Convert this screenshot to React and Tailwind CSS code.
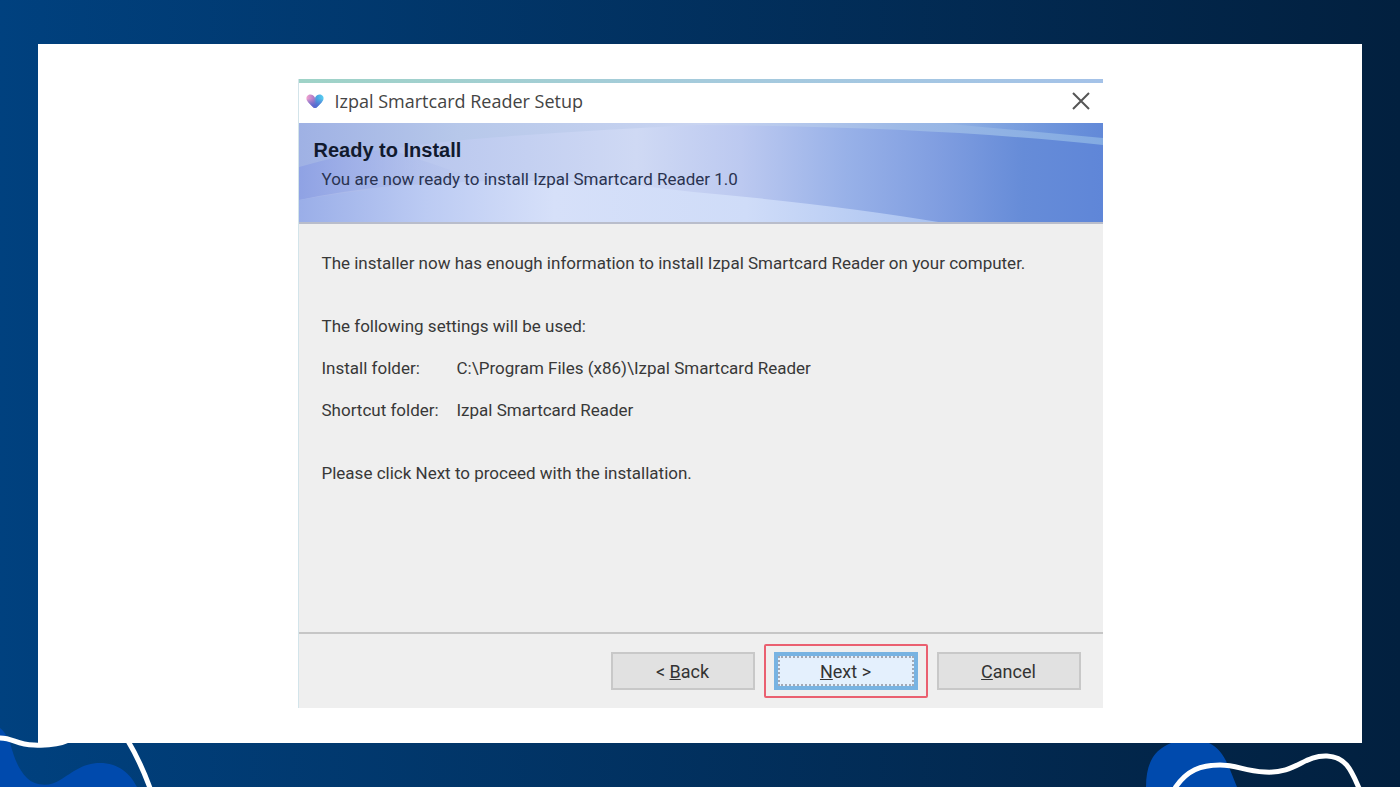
const settings = [
  { label: "Install folder:", value: "C:\\Program Files (x86)\\Izpal Smartcard Reader" },
  { label: "Shortcut folder:", value: "Izpal Smartcard Reader" },
];

const HeartLogo = () => (
  <svg viewBox="0 0 20 18" className="h-[17px] w-5" aria-hidden="true">
    <defs>
      <linearGradient id="heart" x1="0" y1="0" x2="1" y2="0">
        <stop offset="0" stopColor="#f3a3cf" />
        <stop offset="0.42" stopColor="#b07bc8" />
        <stop offset="0.6" stopColor="#45a5e0" />
        <stop offset="1" stopColor="#5cd0f2" />
      </linearGradient>
      <linearGradient id="heartShade" x1="0" y1="0" x2="0" y2="1">
        <stop offset="0.3" stopColor="#5568cf" stopOpacity="0" />
        <stop offset="0.8" stopColor="#5568cf" stopOpacity="0.9" />
      </linearGradient>
    </defs>
    {["url(#heart)", "url(#heartShade)"].map((fill) => (
      <path
        key={fill}
        fill={fill}
        d="M10 5C8 1 4 1 2 3C0 5 1 8 3 10L8 15Q10 17 12 15L17 10C19 8 20 5 18 3C16 1 12 1 10 5Z"
      />
    ))}
  </svg>
);

const BannerArt = () => (
  <svg
    viewBox="0 0 805 99"
    preserveAspectRatio="none"
    className="absolute inset-0 h-full w-full"
    aria-hidden="true"
  >
    <defs>
      <linearGradient id="band" x1="0" y1="0" x2="1" y2="0">
        <stop offset="0" stopColor="#a3b2e8" />
        <stop offset="0.15" stopColor="#b9c7ee" />
        <stop offset="0.42" stopColor="#cfd9f4" />
        <stop offset="0.55" stopColor="#bcc9f0" />
        <stop offset="0.68" stopColor="#98b1e8" />
        <stop offset="0.8" stopColor="#7f9de0" />
        <stop offset="0.9" stopColor="#668cd8" />
        <stop offset="1" stopColor="#5f86d8" />
      </linearGradient>
      <linearGradient id="topBand" gradientUnits="userSpaceOnUse" x1="0" y1="0" x2="805" y2="0">
        <stop offset="0" stopColor="#9fb1e4" />
        <stop offset="0.2" stopColor="#b7c8ea" />
        <stop offset="0.5" stopColor="#c9d4f1" />
        <stop offset="0.75" stopColor="#9db9e6" />
        <stop offset="1" stopColor="#83abe2" />
      </linearGradient>
      <linearGradient id="lowBand" gradientUnits="userSpaceOnUse" x1="0" y1="0" x2="640" y2="0">
        <stop offset="0" stopColor="#9aaee8" />
        <stop offset="0.2" stopColor="#bccbf3" />
        <stop offset="0.4" stopColor="#d6e0f9" />
        <stop offset="0.7" stopColor="#cfdcf8" />
        <stop offset="1" stopColor="#a9c2f0" />
      </linearGradient>
      <linearGradient id="leftBand" x1="0" y1="0" x2="1" y2="0">
        <stop offset="0" stopColor="#8fa2e4" />
        <stop offset="1" stopColor="#b7c5ee" stopOpacity="0" />
      </linearGradient>
      <linearGradient id="corner" x1="0" y1="0" x2="1" y2="0">
        <stop offset="0" stopColor="#6289d8" stopOpacity="0" />
        <stop offset="1" stopColor="#6289d8" />
      </linearGradient>
    </defs>
    <rect width="805" height="99" fill="url(#band)" />
    <path d="M0 44Q90 22 200 14T400 2Q640 4 805 22V0H0Z" fill="url(#topBand)" />
    <path d="M0 44Q40 32 90 26L190 60Q90 58 0 77Z" fill="url(#leftBand)" />
    <path d="M640 0L805 15V0Z" fill="url(#corner)" />
    <path d="M0 77Q200 43 395 69Q540 82 640 99H0Z" fill="url(#lowBand)" />
  </svg>
);

const LeftWave = () => (
  <svg
    viewBox="0 0 160 60"
    className="pointer-events-none absolute bottom-0 left-0 h-[60px] w-40"
    aria-hidden="true"
  >
    <path
      d="M0 1C4 4 8 10 10 16C14 30 18 42 27 51C35 59 50 60 60 53C72 46 82 36 100 36C118 36 130 46 137 60H0Z"
      fill="#004aad"
    />
    <path d="M0 11C14 11 16 18 34 18C50 19 60 17 69 13" fill="none" stroke="#fff" strokeWidth="5" />
    <path d="M128 14Q140 34 150 61" fill="none" stroke="#fff" strokeWidth="5" />
  </svg>
);

const RightWave = () => (
  <svg
    viewBox="0 0 260 44"
    className="pointer-events-none absolute right-0 bottom-0 h-11 w-[260px]"
    aria-hidden="true"
  >
    <path d="M6 44C6 20 14 7 31 0H69C84 7 88 22 97 44Z" fill="#004aad" />
    <path
      d="M35 45C47 27 61 22 80 22C98 22 103 28 125 29C156 31 163 12 187 13C206 14 211 27 219 45"
      fill="none"
      stroke="#fff"
      strokeWidth="5"
    />
  </svg>
);

const buttonStyle =
  "h-[38px] w-36 border-2 border-[#c8c8c8] bg-[#e1e1e1] text-[18px] leading-[21px] text-[#333]";

const App = () => {
  return (
    <main className="relative flex min-h-screen flex-col bg-linear-to-r from-[#00417f] to-[#02203f] px-[38px] py-11 font-[Roboto,'Liberation_Sans',sans-serif]">
      <div className="flex flex-1 flex-col items-center bg-white py-[35px]">
        <section
          aria-labelledby="window-title"
          className="flex w-full max-w-[805px] flex-1 flex-col border-l border-[#d3e4ea] bg-[#efefef]"
        >
          <div className="h-1 bg-linear-to-r from-[#9fd3c7] via-[#a5cbdc] to-[#a4c2e8]" />
          <header className="flex h-10 items-center bg-white pr-3 pb-1 pl-1.5">
            <HeartLogo />
            <h1
              id="window-title"
              className="ml-2.5 flex-1 font-['Open_Sans','Noto_Sans',sans-serif] text-[18px] leading-6 text-[#444]"
            >
              Izpal Smartcard Reader Setup
            </h1>
            <button type="button" aria-label="Close" className="flex size-5 items-center justify-center">
              <svg viewBox="0 0 18 18" className="size-[18px]" aria-hidden="true">
                <path d="M1 1L17 17M17 1L1 17" stroke="#555" strokeWidth="2" />
              </svg>
            </button>
          </header>

          <div className="relative h-[99px]">
            <BannerArt />
            <div className="relative px-[15px] pt-[17px] text-[#111a2e]">
              <h2 className="font-['Liberation_Sans',Arial,sans-serif] text-[20px] leading-[21px] font-bold">
                Ready to Install
              </h2>
              <p className="mt-2 pl-2 text-[17px] leading-[21px] text-[#2a3350]">
                You are now ready to install Izpal Smartcard Reader 1.0
              </p>
            </div>
          </div>

          <div className="flex-1 border-t-2 border-b-2 border-t-[#b9bdcb] border-b-[#c6c6c6] px-[23px] pt-[29px] text-[17px] leading-[21px] text-[#383838]">
            <p>
              The installer now has enough information to install Izpal Smartcard Reader on your
              computer.
            </p>
            <p className="mt-[42px]">The following settings will be used:</p>
            <dl className="mt-[21px] flex flex-col gap-[21px]">
              {settings.map((item) => (
                <div key={item.label} className="flex">
                  <dt className="w-[135px] shrink-0">{item.label}</dt>
                  <dd>{item.value}</dd>
                </div>
              ))}
            </dl>
            <p className="mt-[42px] mb-7">Please click Next to proceed with the installation.</p>
          </div>

          <footer className="flex h-[74px] items-center justify-end gap-[9px] pr-[22px]">
            <button type="button" className={buttonStyle}>
              &lt; <u>B</u>ack
            </button>
            <div className="rounded-xs border-2 border-[#ea6070] px-2 py-1.5">
              <button
                type="button"
                className="h-[38px] w-36 border-4 border-[#78b3e2] bg-[#e4f0fd] text-[18px] leading-[21px] text-[#333] outline-2 -outline-offset-6 outline-dotted outline-[#a3a9b5]"
              >
                <u>N</u>ext &gt;
              </button>
            </div>
            <button type="button" className={buttonStyle}>
              <u>C</u>ancel
            </button>
          </footer>
        </section>
      </div>
      <LeftWave />
      <RightWave />
    </main>
  );
};

export default App;
